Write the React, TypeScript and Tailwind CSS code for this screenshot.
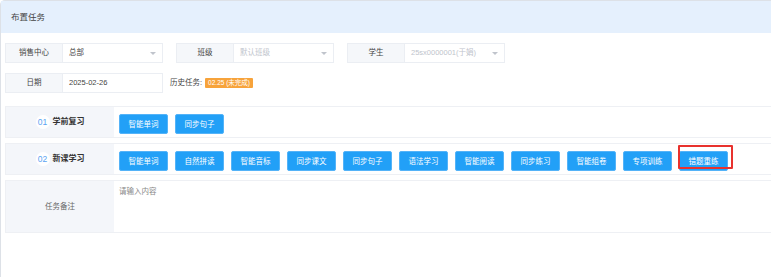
import React from "react";

const font = { fontFamily: '"Liberation Sans", "Noto Sans CJK SC", sans-serif' };

interface FieldProps {
  label: string;
  value: string;
  placeholder?: boolean;
  select?: boolean;
}

function Field({ label, value, placeholder = false, select = true }: FieldProps) {
  return (
    <div className="flex h-[20px]">
      <div className="w-[58px] flex items-center justify-center bg-[#f5f7fa] border border-[#ebeef3] text-[7.5px] text-[#444]">
        {label}
      </div>
      <div className="w-[100px] flex items-center justify-between border border-l-0 border-[#ebeef3] pl-[6px] pr-[6px]">
        <span className={`whitespace-nowrap text-[7.5px] ${placeholder ? "text-[#c0c4cc]" : "text-[#444]"}`}>{value}</span>
        {select && (
          <span className="w-0 h-0 border-l-[3px] border-r-[3px] border-t-[3px] border-l-transparent border-r-transparent border-t-[#c0c4cc]"></span>
        )}
      </div>
    </div>
  );
}

function TaskButton({ text, marked = false }: { text: string; marked?: boolean }) {
  return (
    <div className="relative">
      <button className="w-[49px] h-[20px] bg-[#22a0f7] border border-[#54b3f8] rounded-[2px] text-white text-[7.5px] leading-none">
        {text}
      </button>
      {marked && (
        <div className="absolute left-[-1px] top-[-2px] w-[55px] h-[24px] border-2 border-[#e8322e] rounded-[1px]"></div>
      )}
    </div>
  );
}

function RowLabel({ num, title }: { num: string; title: string }) {
  return (
    <div className="w-[108px] shrink-0 flex items-center justify-center gap-[3px] bg-[#f4f6fa]">
      <span className="w-[14px] h-[14px] rounded-full bg-white flex items-center justify-center text-[8.5px] text-[#5aa2f2]">
        {num}
      </span>
      <span className="text-[8px] font-bold text-[#333]">{title}</span>
    </div>
  );
}

const preview = ["智能单词", "同步句子"];
const newLessons = [
  "智能单词",
  "自然拼读",
  "智能音标",
  "同步课文",
  "同步句子",
  "语法学习",
  "智能阅读",
  "同步练习",
  "智能组卷",
  "专项训练",
  "错题重练",
];

export default function App() {
  return (
    <div className="w-[771px] h-[277px] overflow-hidden bg-white" style={font}>
      <div className="w-[800px] h-[290px] border-l border-t border-[#dde1e7] rounded-tl-[5px]">
        {/* Header */}
        <div className="h-[32px] bg-[#e5f0fd] flex items-center pl-[10px] text-[8.5px] text-[#444]">布置任务</div>

        <div className="pl-[4px] pt-[10px]">
          {/* Filters */}
          <div className="flex gap-[13px]">
            <Field label="销售中心" value="总部" />
            <Field label="班级" value="默认班级" placeholder />
            <Field label="学生" value="25sx0000001(于娟)" placeholder />
          </div>
          <div className="flex items-center mt-[10px]">
            <Field label="日期" value="2025-02-26" select={false} />
            <span className="ml-[7px] text-[7.5px] text-[#444]">历史任务:</span>
            <span className="ml-[3px] h-[10px] px-[3px] flex items-center bg-[#f7a33b] rounded-[1px] text-[6.5px] text-white">
              02.25 (未完成)
            </span>
          </div>

          {/* Task rows */}
          <div className="mt-[13px] flex flex-col gap-[5px]">
            <div className="flex h-[32px] border border-[#eef0f4]">
              <RowLabel num="01" title="学前复习" />
              <div className="flex items-center gap-[7px] pl-[5px]">
                {preview.map((t) => (
                  <TaskButton key={t} text={t} />
                ))}
              </div>
            </div>
            <div className="flex h-[32px] border border-[#eef0f4]">
              <RowLabel num="02" title="新课学习" />
              <div className="flex items-center gap-[7px] pl-[5px]">
                {newLessons.map((t, i) => (
                  <TaskButton key={t} text={t} marked={i === newLessons.length - 1} />
                ))}
              </div>
            </div>
            <div className="flex h-[53px] border border-[#eef0f4]">
              <div className="w-[108px] shrink-0 flex items-center justify-center bg-[#f4f6fa] text-[7.5px] text-[#666]">
                任务备注
              </div>
              <div className="flex-1 pl-[5px] pt-[5px] text-[7.5px] text-[#888]">请输入内容</div>
            </div>
          </div>
        </div>
      </div>
    </div>
  );
}
